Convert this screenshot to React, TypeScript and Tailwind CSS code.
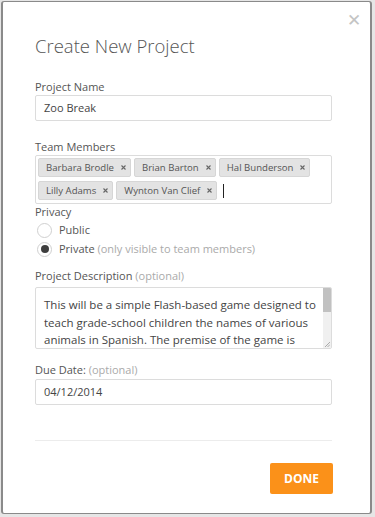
import React from "react";

const tags1 = ["Barbara Brodle", "Brian Barton", "Hal Bunderson"];
const tags2 = ["Lilly Adams", "Wynton Van Clief"];

function Tag({ name }: { name: string }) {
  return (
    <span className="flex items-center whitespace-nowrap h-[19px] pl-[7px] pr-[4px] rounded-[2px] bg-[#e3e3e3] border border-[#d6d6d6] text-[9.6px] text-[#555] leading-none">
      {name}
      <svg className="ml-[7px]" width="5" height="5" viewBox="0 0 5 5">
        <path d="M0.5 0.5 L4.5 4.5 M4.5 0.5 L0.5 4.5" stroke="#666" strokeWidth="1.1" />
      </svg>
    </span>
  );
}

export default function App() {
  return (
    <div className="w-[375px] h-[517px] bg-[#e6e6e6] p-[1px] pb-[3px]" style={{ fontFamily: '"Open Sans", sans-serif' }}>
      <div className="relative h-full w-[371px] bg-white border border-[#8a8a8a] border-l-[2px] border-r-[2px] rounded-[3px] pl-[32px] pr-[38px]">
        <span className="absolute right-[9px] top-[9px] text-[17px] text-[#c4c4c4] font-light leading-none">✕</span>
        <h1 className="pt-[31px] text-[18.5px] font-light text-[#555] leading-[26px]">Create New Project</h1>

        <div className="mt-[20px] text-[11px] text-[#555] leading-[15px]">Project Name</div>
        <div className="mt-[1px] h-[26px] border border-[#dcdcdc] rounded-[2px] flex items-center px-[8px] text-[11px] text-[#444]">Zoo Break</div>

        <div className="mt-[18px] text-[11px] text-[#555] leading-[15px]">Team Members</div>
        <div className="mt-[1px] h-[49px] border border-[#dcdcdc] rounded-[2px] px-[2px] pt-[2px] flex flex-col gap-[4px]">
          <div className="flex gap-[3px]">
            {tags1.map((t) => <Tag key={t} name={t} />)}
          </div>
          <div className="flex gap-[3px] items-center">
            {tags2.map((t) => <Tag key={t} name={t} />)}
            <span className="ml-[3px] w-[1px] h-[14px] bg-[#222]" />
          </div>
        </div>

        <div className="text-[11px] text-[#555] leading-[15px]">Privacy</div>
        <div className="mt-[3px] flex flex-col gap-[3px] text-[11px] text-[#555]">
          <div className="flex items-center h-[16px]">
            <span className="w-[15px] h-[15px] rounded-full border border-[#d0d0d0] bg-white ml-[2px]" />
            <span className="ml-[7px]">Public</span>
          </div>
          <div className="flex items-center h-[16px]">
            <span className="w-[15px] h-[15px] rounded-full border border-[#d0d0d0] bg-white ml-[2px] flex items-center justify-center">
              <span className="w-[8px] h-[8px] rounded-full bg-[#3e3e3e]" />
            </span>
            <span className="ml-[7px]">Private <span className="text-[#aaa]">(only visible to team members)</span></span>
          </div>
        </div>

        <div className="mt-[11px] text-[11px] text-[#555] leading-[15px]">Project Description <span className="text-[#aaa]">(optional)</span></div>
        <div className="relative mt-[4px] h-[62px] border border-[#dcdcdc] rounded-[2px] overflow-hidden">
          <p className="pl-[8px] pr-[12px] pt-[8px] text-[11.5px] text-[#444] leading-[17.5px]">
            This will be a simple Flash-based game designed to teach grade-school children the names of various animals in Spanish. The premise of the game is that all of the animals have escaped from the local zoo.
          </p>
          <div className="absolute right-0 top-0 bottom-0 w-[8px] bg-[#f0f0f0]">
            <div className="h-[24px] bg-[#c1c1c1]" />
          </div>
          <svg className="absolute right-[1px] bottom-[1px]" width="6" height="6" viewBox="0 0 6 6">
            <path d="M1 6 L6 1 M3.5 6 L6 3.5" stroke="#999" strokeWidth="0.8" />
          </svg>
        </div>

        <div className="mt-[13px] text-[11px] text-[#555] leading-[15px]">Due Date: <span className="text-[#aaa]">(optional)</span></div>
        <div className="mt-[2px] h-[26px] border border-[#dcdcdc] rounded-[2px] flex items-center px-[8px] text-[11px] text-[#444]">04/12/2014</div>

        <div className="mt-[35px] h-[1px] bg-[#ececec]" />

        <div className="mt-[22px] flex justify-end">
          <button className="h-[31px] w-[63px] rounded-[2px] bg-[#fb9119] text-white text-[12px] font-bold -mr-[1px]">DONE</button>
        </div>
      </div>
    </div>
  );
}
